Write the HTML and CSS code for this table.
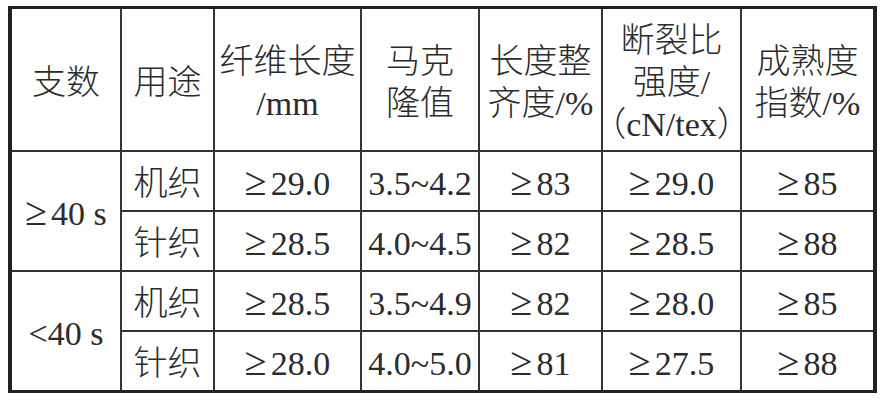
FILE: index.html
```html
<!DOCTYPE html>
<html lang="zh-CN">
<head>
<meta charset="utf-8">
<title>棉纤维指标</title>
<link rel="stylesheet" href="styles.css">
</head>
<body>
<div class="frame">
<table class="spec">
<colgroup>
<col class="c1"><col class="c2"><col class="c3"><col class="c4"><col class="c5"><col class="c6"><col class="c7">
</colgroup>
<thead>
<tr class="head">
<th>支数</th>
<th>用途</th>
<th>纤维长度<br>/mm</th>
<th>马克<br>隆值</th>
<th>长度整<br>齐度/%</th>
<th>断裂比<br>强度/<br>（cN/tex）</th>
<th>成熟度<br>指数/%</th>
</tr>
</thead>
<tbody>
<tr class="row">
<td rowspan="2"><span class="ge">≥</span>40 s</td>
<td>机织</td><td><span class="ge">≥</span>29.0</td><td>3.5~4.2</td><td><span class="ge">≥</span>83</td><td><span class="ge">≥</span>29.0</td><td><span class="ge">≥</span>85</td>
</tr>
<tr class="row">
<td>针织</td><td><span class="ge">≥</span>28.5</td><td>4.0~4.5</td><td><span class="ge">≥</span>82</td><td><span class="ge">≥</span>28.5</td><td><span class="ge">≥</span>88</td>
</tr>
<tr class="row">
<td rowspan="2">&lt;40 s</td>
<td>机织</td><td><span class="ge">≥</span>28.5</td><td>3.5~4.9</td><td><span class="ge">≥</span>82</td><td><span class="ge">≥</span>28.0</td><td><span class="ge">≥</span>85</td>
</tr>
<tr class="row last">
<td>针织</td><td><span class="ge">≥</span>28.0</td><td>4.0~5.0</td><td><span class="ge">≥</span>81</td><td><span class="ge">≥</span>27.5</td><td><span class="ge">≥</span>88</td>
</tr>
</tbody>
</table>
</div>
</body>
</html>
```
FILE: styles.css
```css
html, body {
  margin: 0;
  padding: 0;
  background: #ffffff;
}
body {
  padding: 6px 0 0 8px;
}
.frame {
  width: 861px;
  height: 381px;
  border: 3px solid #222222;
  border-right-width: 4px;
  border-left-width: 4px;
}
.spec {
  width: 861px;
  height: 381px;
  table-layout: fixed;
  border-collapse: collapse;
  border-style: hidden;
  font-family: "Liberation Serif", "Noto Sans CJK SC", serif;
  font-size: 34px;
  font-weight: 300;
  color: #2b2b2b;
  font-feature-settings: "halt" 1;
}
.spec th, .spec td {
  border: 2px solid #333333;
  padding: 6px 0 0 0;
  text-align: center;
  vertical-align: middle;
  font-weight: 300;
  line-height: 42px;
  white-space: nowrap;
}
.ge {
  font-size: 40px;
  line-height: 0;
  margin-right: 4px;
}
.c1 { width: 109px; }
.c2 { width: 93px; }
.c3 { width: 147px; }
.c4 { width: 118px; }
.c5 { width: 123px; }
.c6 { width: 139px; }
.c7 { width: 132px; }
.head { height: 142px; }
.row { height: 60px; }
.row.last { height: 59px; }
```
